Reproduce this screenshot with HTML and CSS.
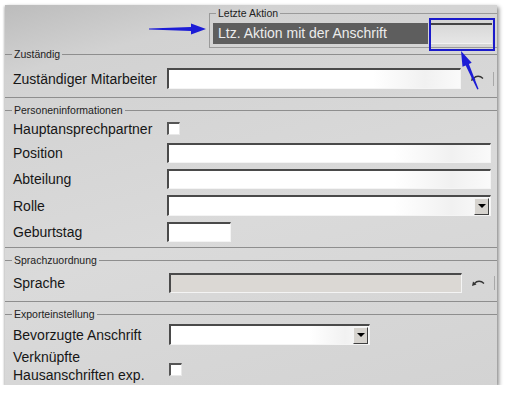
FILE: index.html
```html
<!DOCTYPE html>
<html lang="de">
<head>
    <meta charset="UTF-8">
    <title>Kontakt</title>
    <link rel="stylesheet" href="styles.css">
</head>
<body>
    <div class="window">
        <!-- Letzte Aktion -->
        <div class="header">
            <fieldset class="last-action">
                <legend>Letzte Aktion</legend>
                <div class="last-action-body">
                    <div class="last-action-text">Ltz. Aktion mit der Anschrift</div>
                    <div class="last-action-box"></div>
                </div>
            </fieldset>
        </div>

        <fieldset class="group group-owner">
            <legend>Zuständig</legend>
            <div class="row row-21">
                <span class="label">Zuständiger Mitarbeiter</span>
                <div class="field w-owner"></div>
                <span class="pick">
                    <svg width="14" height="9" viewBox="0 0 14 9"><path d="M13 4.5 C10 1.5 6 1.5 3.5 4.5" fill="none" stroke="#333" stroke-width="1.3"/><path d="M1 7 L2 2.5 L5.5 5.5 Z" fill="#333"/></svg>
                </span>
                <span class="pick-line"></span>
            </div>
        </fieldset>

        <fieldset class="group group-person">
            <legend>Personeninformationen</legend>
            <div class="row row-check">
                <span class="label">Hauptansprechpartner</span>
                <span class="checkbox"></span>
            </div>
            <div class="row row-20">
                <span class="label">Position</span>
                <div class="field w-full"></div>
            </div>
            <div class="row row-20">
                <span class="label">Abteilung</span>
                <div class="field w-full"></div>
            </div>
            <div class="row row-21">
                <span class="label">Rolle</span>
                <div class="field select w-full"><span class="drop"></span></div>
            </div>
            <div class="row row-20">
                <span class="label">Geburtstag</span>
                <div class="field plain w-date"></div>
            </div>
        </fieldset>

        <fieldset class="group group-lang">
            <legend>Sprachzuordnung</legend>
            <div class="row row-20">
                <span class="label label-wide">Sprache</span>
                <div class="field disabled w-lang"></div>
                <span class="pick">
                    <svg width="14" height="9" viewBox="0 0 14 9"><path d="M13 4.5 C10 1.5 6 1.5 3.5 4.5" fill="none" stroke="#333" stroke-width="1.3"/><path d="M1 7 L2 2.5 L5.5 5.5 Z" fill="#333"/></svg>
                </span>
                <span class="pick-line"></span>
            </div>
        </fieldset>

        <fieldset class="group group-export">
            <legend>Exporteinstellung</legend>
            <div class="row row-21">
                <span class="label label-wide">Bevorzugte Anschrift</span>
                <div class="field select w-addr"><span class="drop"></span></div>
            </div>
            <div class="row row-multi">
                <span class="label label-wide">Verknüpfte<br>Hausanschriften exp.</span>
                <span class="checkbox"></span>
            </div>
        </fieldset>
    </div>

    <!-- annotations -->
    <div class="mark-box"></div>
    <svg class="arrow-right" width="60" height="14" viewBox="0 0 60 14">
        <polygon points="1,6.6 43,5 43,1.5 58,7 43,12.5 43,9 1,7.4" fill="#1c1cd6"/>
    </svg>
    <svg class="arrow-up" width="30" height="44" viewBox="0 0 30 44">
        <polygon points="6,3 16.7,14.7 13.9,15.9 23.6,41 22.3,41.4 10.7,17.4 7.5,18.7" fill="#1c1cd6"/>
    </svg>
</body>
</html>
```

FILE: styles.css
```css
body {
    margin: 0;
    background: #fff;
    font-family: "Liberation Sans", Arial, sans-serif;
    color: #161616;
    position: relative;
}

/* window panel */
.window {
    margin: 5px 0 0 5px;
    width: 492px;
    height: 380px;
    overflow: hidden;
    background: linear-gradient(165deg, #bcbcbc 0%, #d2d2d2 14%, #dadada 55%, #d3d3d3 100%);
    box-shadow: 2px 2px 4px rgba(0, 0, 0, 0.45), -1px 1px 2px rgba(0, 0, 0, 0.2);
}

/* Letzte Aktion */
.header {
    height: 43px;
    padding-top: 2px;
    box-sizing: border-box;
}

.last-action {
    margin: 0 0 0 204px;
    padding: 4px 0 3px 3px;
    border: 1px solid #9a9a9a;
    border-right: none;
    min-width: 0;
}

.last-action legend {
    font-size: 10.5px;
    line-height: 12px;
    padding: 0 2px;
    margin-left: 3px;
    color: #222;
}

.last-action-body {
    display: flex;
    height: 21px;
}

.last-action-text {
    width: 215px;
    background: #5e5e5e;
    color: #ececec;
    font-size: 14px;
    line-height: 21px;
    padding-left: 5px;
    box-sizing: border-box;
}

.last-action-box {
    width: 62px;
    margin-left: 2px;
    background: linear-gradient(180deg, #d8d8d8, #e6e6e6);
    border-top: 2px solid #444;
    border-bottom: 1px solid #f2f2f2;
    box-sizing: border-box;
}

/* group boxes */
.group {
    margin: 0;
    padding: 0 0 0 7px;
    border: none;
    border-top: 1px solid #8e8e8e;
    border-bottom: 1px solid #8e8e8e;
    min-width: 0;
}

.group legend {
    font-size: 10.5px;
    line-height: 12px;
    padding: 0 2px;
    color: #222;
}

.group-owner {
    padding-bottom: 8px;
}

.group-person {
    margin-top: 6px;
    padding-bottom: 5px;
}

.group-lang {
    margin-top: 6px;
    padding-bottom: 8px;
}

.group-export {
    margin-top: 6px;
    border-bottom: none;
}

.group-owner .row:first-of-type { margin-top: 8px; }
.group-person .row:first-of-type { margin-top: 4px; }
.group-lang .row:first-of-type { margin-top: 7px; }
.group-export .row:first-of-type { margin-top: 4px; }

.group-person .row + .row { margin-top: 6px; }
.group-person .row:last-child { margin-top: 6px; }

/* rows */
.row {
    display: flex;
    align-items: center;
    padding-left: 1px;
}

.row-20 { height: 20px; }
.row-21 { height: 21px; }
.row-check { height: 17px; }

.row-multi {
    margin-top: 3px;
    align-items: flex-start;
}

.label {
    width: 154px;
    flex-shrink: 0;
    font-size: 14px;
    line-height: 18px;
}

.label-wide {
    width: 156px;
}

/* inputs */
.field {
    height: 100%;
    box-sizing: border-box;
    border-top: 2px solid #4a4a4a;
    border-left: 2px solid #4a4a4a;
    border-right: 1px solid #f4f4f4;
    border-bottom: 1px solid #f4f4f4;
    background: linear-gradient(90deg, #fff 0%, #fff 70%, #f1f1f1 88%, #fafafa 100%);
}

.field.plain {
    background: #fff;
}

.field.disabled {
    background: #dbd8d4;
}

.w-owner { width: 294px; }
.w-full { width: 324px; }
.w-date { width: 64px; }
.w-lang { width: 293px; }
.w-addr { width: 201px; }

.select {
    display: flex;
    justify-content: flex-end;
    align-items: center;
    padding-right: 1px;
}

.drop {
    width: 15px;
    height: 17px;
    box-sizing: border-box;
    background: #d6d3ce;
    border-top: 1px solid #f4f4f4;
    border-left: 1px solid #f4f4f4;
    border-right: 1px solid #404040;
    border-bottom: 1px solid #404040;
    display: flex;
    align-items: center;
    justify-content: center;
}

.drop::after {
    content: "";
    border-left: 4px solid transparent;
    border-right: 4px solid transparent;
    border-top: 4px solid #000;
}

.checkbox {
    width: 13px;
    height: 13px;
    box-sizing: border-box;
    background: #fff;
    border-top: 2px solid #555;
    border-left: 2px solid #555;
    border-right: 1px solid #e8e8e8;
    border-bottom: 1px solid #e8e8e8;
}

.row-multi .checkbox {
    margin-top: 15px;
}

.pick {
    display: flex;
    margin-left: 9px;
}

.pick-line {
    width: 1px;
    height: 14px;
    margin-left: 9px;
    background: #a8a8a8;
}

/* blue annotations */
.mark-box {
    position: absolute;
    left: 429px;
    top: 18px;
    width: 62px;
    height: 29px;
    border: 2px solid #1a1acb;
}

.arrow-right {
    position: absolute;
    left: 148px;
    top: 22px;
}

.arrow-up {
    position: absolute;
    left: 455px;
    top: 48px;
}
```
